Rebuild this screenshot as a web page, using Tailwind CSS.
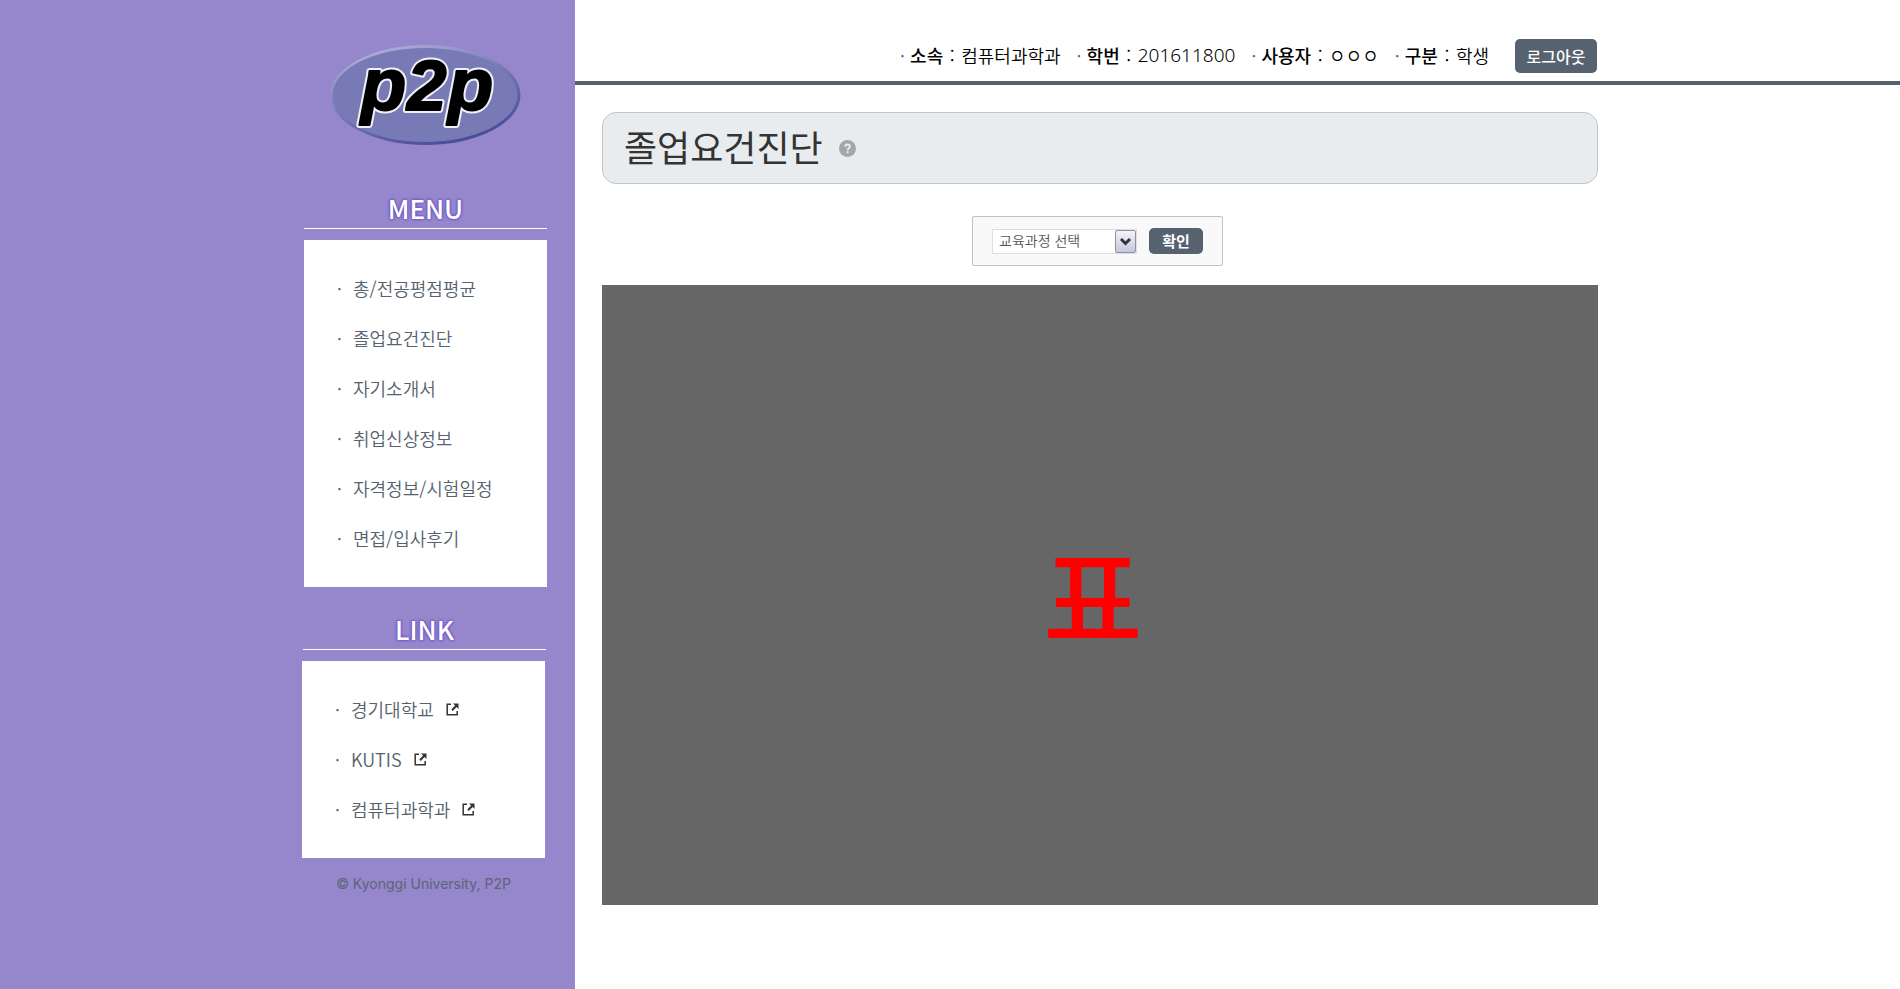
<!DOCTYPE html>
<html lang="ko">
<head>
<meta charset="utf-8">
<meta name="viewport" content="width=device-width, initial-scale=1">
<title>졸업요건진단</title>
<script src="https://cdn.jsdelivr.net/npm/@tailwindcss/browser@4"></script>
</head>
<body class="flex min-h-screen bg-white font-['Noto_Sans_CJK_KR',sans-serif] text-black">
<svg class="hidden" aria-hidden="true">
  <symbol id="external" viewBox="0 0 13 13">
    <path d="M5 1.2H1.2V11.8H11.2V8" fill="none" stroke="#333" stroke-width="1.5"/>
    <path d="M7 .5h5.5V6l-1.9-1.9L6.8 7.9 5.3 6.4 9.1 2.6z" fill="#333"/>
  </symbol>
</svg>

<aside class="flex w-[575px] shrink-0 flex-col items-end bg-[#9686cb]">
  <div class="mr-7 flex w-[243px] flex-col">
    <a href="#" class="mt-11 flex justify-center" aria-label="p2p">
      <svg class="h-[102px] w-[192px]" viewBox="0 0 192 102" role="img" aria-label="p2p">
        <defs>
          <linearGradient id="rim" x1="0.2" y1="0" x2="0.75" y2="1">
            <stop offset="0" stop-color="#b3b3df"/>
            <stop offset="0.5" stop-color="#7376b0"/>
            <stop offset="1" stop-color="#454796"/>
          </linearGradient>
          <g id="letters" font-family="Liberation Sans, Arial, sans-serif" font-weight="bold" font-style="italic" stroke-linejoin="round">
            <text x="31" y="66" font-size="74">p</text>
            <text x="118" y="66" font-size="74">p</text>
            <text x="77" y="66" font-size="71">2</text>
          </g>
        </defs>
        <ellipse cx="95.500" cy="51" rx="95" ry="50" fill="url(#rim)"/>
        <ellipse cx="95" cy="51" rx="92.500" ry="47" fill="#777ab4"/>
        <use href="#letters" stroke="#f0f0fa" stroke-width="6"/>
        <use href="#letters" stroke="#000" stroke-width="2"/>
      </svg>
    </a>

    <h2 class="mt-[45px] border-b border-white pb-[3px] text-center text-[26px] leading-[34px] font-medium text-white [text-shadow:0_0_3px_#6a55c8,0_0_3px_#6a55c8,0_0_2px_#6a55c8]">MENU</h2>
    <nav aria-label="MENU" class="mt-[11px] bg-white px-8 pt-[23px] pb-6 text-lg font-[350] text-[#566270]">
      <ul>
        <li class="flex h-[50px] items-center"><span class="w-[17px] pl-px">·</span><a href="#">총/전공평점평균</a></li>
        <li class="flex h-[50px] items-center"><span class="w-[17px] pl-px">·</span><a href="#">졸업요건진단</a></li>
        <li class="flex h-[50px] items-center"><span class="w-[17px] pl-px">·</span><a href="#">자기소개서</a></li>
        <li class="flex h-[50px] items-center"><span class="w-[17px] pl-px">·</span><a href="#">취업신상정보</a></li>
        <li class="flex h-[50px] items-center"><span class="w-[17px] pl-px">·</span><a href="#">자격정보/시험일정</a></li>
        <li class="flex h-[50px] items-center"><span class="w-[17px] pl-px">·</span><a href="#">면접/입사후기</a></li>
      </ul>
    </nav>
  </div>
  <div class="mr-[29px] flex w-[243px] flex-col">
    <h2 class="mt-[25px] border-b border-white pb-[3px] text-center text-[26px] leading-[34px] font-medium text-white [text-shadow:0_0_3px_#6a55c8,0_0_3px_#6a55c8,0_0_2px_#6a55c8]">LINK</h2>
  </div>
  <div class="mr-[30px] flex w-[243px] flex-col">
    <nav aria-label="LINK" class="mt-[11px] bg-white px-8 pt-[23px] pb-6 text-lg font-[350] text-[#566270]">
      <ul>
        <li class="flex h-[50px] items-center"><span class="w-[17px] pl-px">·</span><a href="#" class="flex items-center gap-3">경기대학교<svg class="size-[13px]" aria-hidden="true"><use href="#external"/></svg></a></li>
        <li class="flex h-[50px] items-center"><span class="w-[17px] pl-px">·</span><a href="#" class="flex items-center gap-3">KUTIS<svg class="size-[13px]" aria-hidden="true"><use href="#external"/></svg></a></li>
        <li class="flex h-[50px] items-center"><span class="w-[17px] pl-px">·</span><a href="#" class="flex items-center gap-3">컴퓨터과학과<svg class="size-[13px]" aria-hidden="true"><use href="#external"/></svg></a></li>
      </ul>
    </nav>
    <p class="mt-4 text-center font-['Inter',sans-serif] text-sm text-[#5c6478]">© Kyonggi University, P2P</p>
  </div>
</aside>

<div class="min-w-0 flex-1">
  <header class="border-b-4 border-[#566270] px-[27px] pt-[39px] pb-2">
    <div class="flex h-[34px] max-w-[995px] items-center justify-end gap-[26px]">
      <ul class="flex gap-4 pb-0.5 text-lg leading-7 font-[350] whitespace-nowrap">
        <li class="flex"><span class="w-2.5 text-[#566270]">·</span><b class="font-medium">소속</b><span class="w-[18px] text-center">:</span>컴퓨터과학과</li>
        <li class="flex"><span class="w-2.5 text-[#566270]">·</span><b class="font-medium">학번</b><span class="w-[18px] text-center">:</span><span class="font-['Noto_Sans',sans-serif] text-[19px]">201611800</span></li>
        <li class="flex"><span class="w-2.5 text-[#566270]">·</span><b class="font-medium">사용자</b><span class="w-[18px] text-center">:</span>ㅇㅇㅇ</li>
        <li class="flex"><span class="w-2.5 text-[#566270]">·</span><b class="font-medium">구분</b><span class="w-[18px] text-center">:</span>학생</li>
      </ul>
      <button type="button" class="h-[34px] w-[82px] rounded-[5px] bg-[#566270] text-base leading-8 font-medium text-white">로그아웃</button>
    </div>
  </header>

  <main class="mx-[27px] mt-[27px] flex max-w-[996px] flex-col items-center">
    <div class="flex h-[72px] w-full items-center gap-4 rounded-[14px] border border-[#c3c5c8] bg-[#e8ecef] pl-[21px]">
      <h1 class="pb-1 text-4xl text-[#333]">졸업요건진단</h1>
      <button type="button" aria-label="도움말">
        <svg class="size-[17px]" viewBox="0 0 17 17" aria-hidden="true">
          <circle cx="8.500" cy="8.500" r="8.500" fill="#a6a6a6"/>
          <path d="M6.200 6.800C6.200 5.200 7.200 4.500 8.500 4.500S10.900 5.300 10.900 6.500C10.900 8.200 8.600 8.200 8.600 10.200" fill="none" stroke="#e8ecef" stroke-width="1.800"/>
          <rect x="7.600" y="11.200" width="2" height="2" fill="#e8ecef"/>
        </svg>
      </button>
    </div>

    <form class="mt-8 mr-[5px] flex h-[50px] w-[251px] items-center justify-between rounded-[2px] border border-[#c0c1c4] bg-[#f9f9f9] px-[19px]">
      <div class="relative h-[25px] w-[145px]">
        <select aria-label="교육과정 선택" class="block h-full w-full appearance-none border border-[#dedede] bg-white pb-0.5 pl-1.5 text-sm leading-5 font-[350] text-[#555]">
          <option>교육과정 선택</option>
        </select>
        <svg class="pointer-events-none absolute top-px right-px h-[23px] w-[21px]" viewBox="0 0 21 23" aria-hidden="true">
          <defs>
            <linearGradient id="arrow" x1="0" y1="0" x2="0" y2="1">
              <stop offset="0" stop-color="#f4f4fa"/>
              <stop offset="1" stop-color="#c6c6dc"/>
            </linearGradient>
          </defs>
          <rect x=".5" y=".5" width="20" height="22" rx="1.500" fill="url(#arrow)" stroke="#8f8fa6"/>
          <path d="M6 9l4.500 4.500L15 9" fill="none" stroke="#333" stroke-width="3"/>
        </svg>
      </div>
      <button type="button" class="h-[26px] w-[54px] rounded-[5px] bg-[#566270] text-[15px] leading-[26px] font-bold text-white">확인</button>
    </form>

    <section class="mt-[19px] flex h-[620px] w-full items-center justify-center bg-[#666] pr-3.5">
      <p class="pb-1 text-[108px] leading-none font-medium text-[#f00]">표</p>
    </section>
  </main>
</div>
</body>
</html>
